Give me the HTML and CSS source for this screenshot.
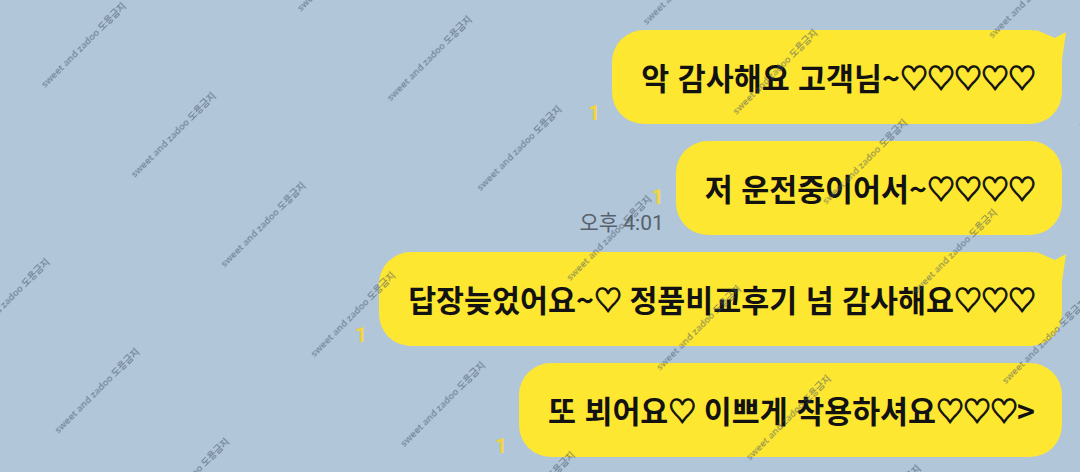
FILE: index.html
```html
<!DOCTYPE html>
<html lang="ko">
<head>
<meta charset="utf-8">
<title>chat</title>
<link rel="stylesheet" href="styles.css">
</head>
<body>

<div class="chat">
	<div class="row">
		<div class="meta"><span class="unread">1</span></div>
		<div class="bubble tail">악 감사해요 고객님~<span class="hearts">♡♡♡♡♡</span></div>
	</div>
	<div class="row">
		<div class="meta"><span class="unread">1</span><span class="time">오후 4:01</span></div>
		<div class="bubble">저 운전중이어서~<span class="hearts">♡♡♡♡</span></div>
	</div>
	<div class="row">
		<div class="meta"><span class="unread">1</span></div>
		<div class="bubble tail">답장늦었어요~<span class="hearts">♡</span> 정품비교후기 넘 감사해요<span class="hearts">♡♡♡</span></div>
	</div>
	<div class="row">
		<div class="meta"><span class="unread">1</span></div>
		<div class="bubble">또 뵈어요<span class="hearts">♡</span> 이쁘게 착용하셔요<span class="hearts">♡♡♡</span>&gt;</div>
	</div>
</div>

<svg class="watermark" width="1080" height="472">
	<defs>
		<pattern id="wm" width="235" height="127" patternUnits="userSpaceOnUse" patternTransform="translate(38 81) rotate(-45)">
			<text x="0" y="10">sweet and zadoo 도용금지</text>
		</pattern>
	</defs>
	<rect width="1080" height="472" fill="url(#wm)"/>
</svg>

</body>
</html>
```

FILE: styles.css
```css
html, body {
	margin: 0;
	height: 100%;
}
body {
	position: relative;
	overflow: hidden;
	background: #b1c6d9;
	font-family: "Noto Sans CJK KR", "Noto Sans", sans-serif;
}
.chat {
	display: flex;
	flex-direction: column;
	align-items: flex-end;
	gap: 17px;
	padding: 30px 18px 0 0;
}
.row {
	display: flex;
	align-items: flex-end;
	gap: 12px;
}
.meta {
	display: flex;
	flex-direction: column;
	align-items: flex-end;
}
.unread {
	font-family: Roboto, "Liberation Sans", sans-serif;
	font-weight: 700;
	font-size: 21px;
	line-height: 22px;
	color: #f4d53a;
}
.time {
	font-family: Roboto, "Noto Sans CJK KR", sans-serif;
	font-size: 21px;
	line-height: 24px;
	color: #57616c;
	margin-top: 3px;
}
.bubble {
	position: relative;
	display: flex;
	align-items: center;
	height: 94px;
	box-sizing: border-box;
	padding: 0 27px 0 29px;
	border-radius: 32px;
	background: #fee731;
	color: #121212;
	font-weight: 700;
	font-size: 30.4px;
	white-space: pre;
}
.hearts {
	font-size: 28px;
	font-weight: 700;
	letter-spacing: -1px;
	-webkit-text-stroke: 1px #121212;
}
.bubble.tail::after {
	content: "";
	position: absolute;
	top: 0;
	right: -4px;
	width: 30px;
	height: 30px;
	background: #fee731;
	clip-path: polygon(0 0, 19px 8px, 30px 2px, 26px 30px, 0 30px);
}
.watermark {
	position: absolute;
	left: 0;
	top: 0;
	pointer-events: none;
}
.watermark text {
	font-family: "Noto Sans", "Noto Sans CJK KR", sans-serif;
	font-size: 9.5px;
	font-weight: 600;
	fill: rgba(70, 84, 100, 0.55);
}
```
